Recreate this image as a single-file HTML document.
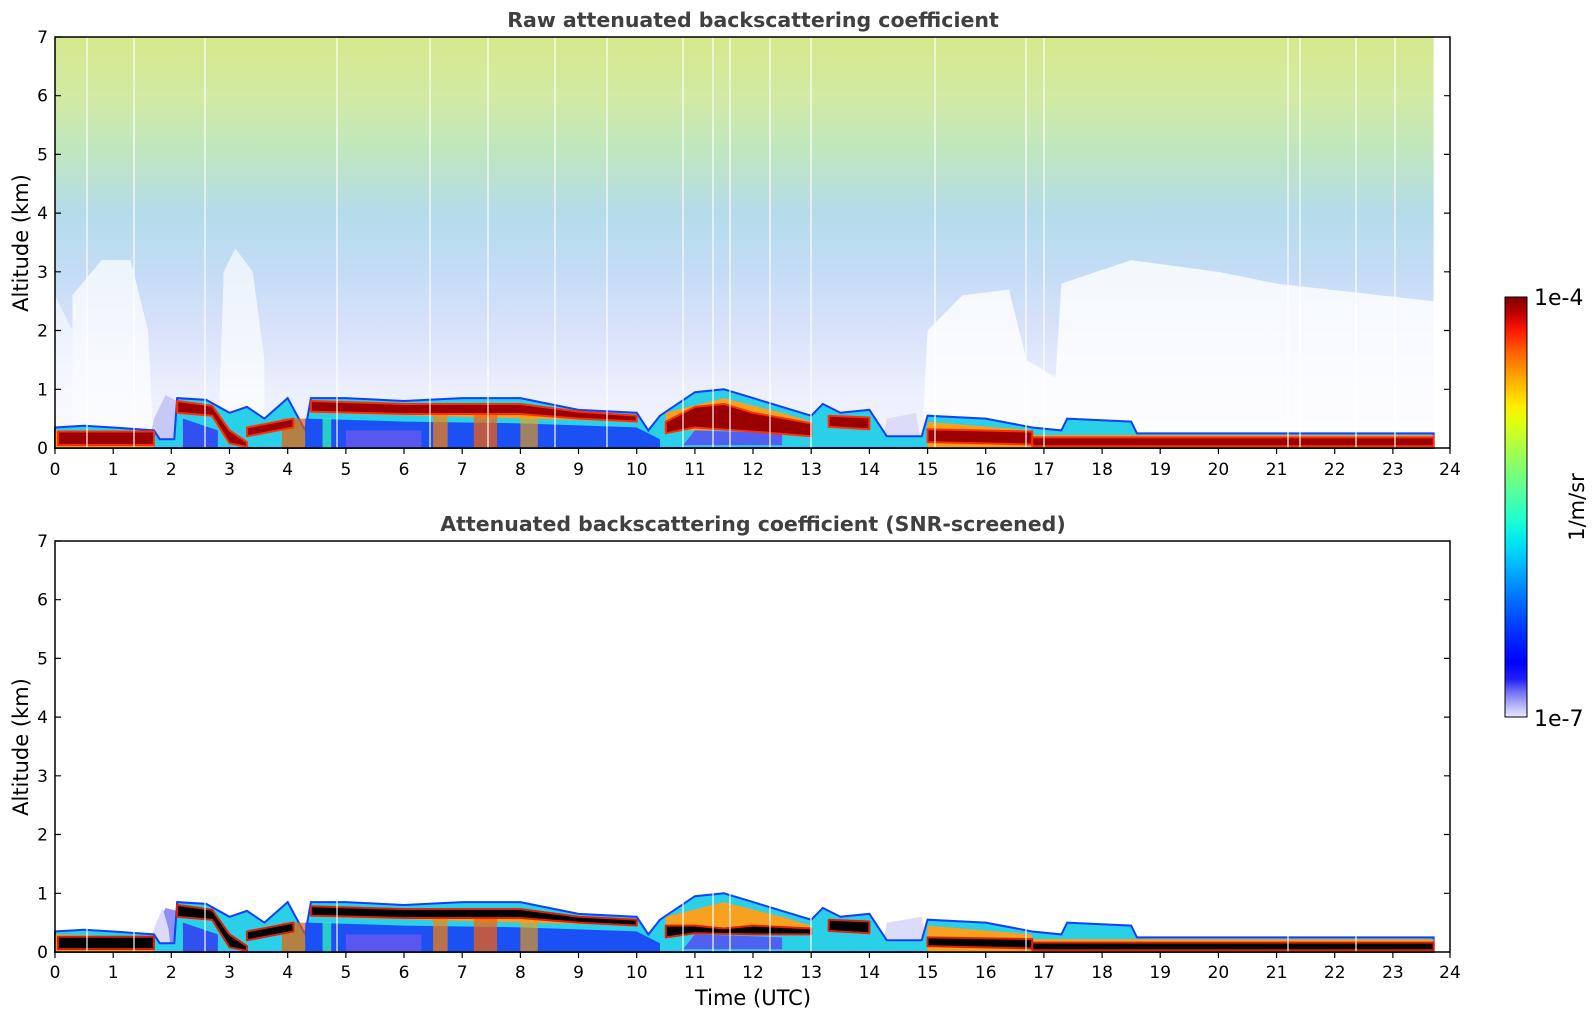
<!DOCTYPE html>
<html><head><meta charset="utf-8"><style>
html,body{margin:0;padding:0;background:#fff;}
svg{display:block;font-family:"DejaVu Sans","Liberation Sans",sans-serif;}
</style></head><body>
<svg width="1595" height="1020" viewBox="0 0 1595 1020" xmlns="http://www.w3.org/2000/svg">
<defs>
<linearGradient id="sky" x1="0" y1="0" x2="0" y2="1">
<stop offset="0" stop-color="#d6e98e"/>
<stop offset="0.14" stop-color="#d2eaa2"/>
<stop offset="0.28" stop-color="#c0e6c0"/>
<stop offset="0.43" stop-color="#b4dcea"/>
<stop offset="0.57" stop-color="#c4dcf6"/>
<stop offset="0.71" stop-color="#d8e2fa"/>
<stop offset="0.86" stop-color="#eceffd"/>
<stop offset="1" stop-color="#f4f4fe"/>
</linearGradient>
<linearGradient id="cbar" x1="0" y1="1" x2="0" y2="0">
<stop offset="0" stop-color="#e8e8fc"/>
<stop offset="0.03" stop-color="#b0b0f8"/>
<stop offset="0.06" stop-color="#7070f4"/>
<stop offset="0.09" stop-color="#2020f8"/>
<stop offset="0.13" stop-color="#0000ff"/>
<stop offset="0.2" stop-color="#0030ff"/>
<stop offset="0.3" stop-color="#0080ff"/>
<stop offset="0.37" stop-color="#00c0ff"/>
<stop offset="0.42" stop-color="#00e8f0"/>
<stop offset="0.47" stop-color="#20ffd0"/>
<stop offset="0.55" stop-color="#60ff90"/>
<stop offset="0.63" stop-color="#a0ff50"/>
<stop offset="0.7" stop-color="#e0ff10"/>
<stop offset="0.74" stop-color="#ffee00"/>
<stop offset="0.8" stop-color="#ffb000"/>
<stop offset="0.87" stop-color="#ff6000"/>
<stop offset="0.92" stop-color="#ff1800"/>
<stop offset="0.96" stop-color="#c00000"/>
<stop offset="1" stop-color="#800000"/>
</linearGradient>
</defs>

<text x="753" y="27" text-anchor="middle" font-size="20.5" font-weight="bold" fill="#404040">Raw attenuated backscattering coefficient</text>
<text x="753" y="531" text-anchor="middle" font-size="20.5" font-weight="bold" fill="#404040">Attenuated backscattering coefficient (SNR-screened)</text>

<rect x="55" y="37" width="1378.6" height="411" fill="url(#sky)"/>
<g transform="translate(55,448) scale(58.17,-58.71)">
<path d="M0.3,0 L0.3,2.6 0.8,3.2 1.3,3.2 1.6,2 1.7,0 Z" fill="#fff" opacity="0.7"/>
<path d="M2.8,0 L2.9,3 3.1,3.4 3.4,3 3.6,1.5 3.6,0 Z" fill="#fff" opacity="0.65"/>
<path d="M14.9,0 L15,2 15.6,2.6 16.4,2.7 16.7,1.5 17.2,1.2 17.3,2.8 18.5,3.2 20,3 21,2.8 23.7,2.5 23.7,0 Z" fill="#fff" opacity="0.8"/>
<path d="M0,0 L0,2.6 0.3,2 0.3,0 Z" fill="#fff" opacity="0.55"/>
<path d="M1.6,0 L1.7,0.5 1.9,0.9 2.1,0.8 2.3,0.5 2.6,0.3 2.6,0 Z" fill="#c8c8f6"/>
<path d="M14.2,0 L14.3,0.5 14.8,0.6 14.9,0 Z" fill="#dcdcfa"/>
<g id="bl">
<path d="M0,0 L0,0.35 0.5,0.38 1,0.35 1.7,0.3 1.8,0.15 2.05,0.15 2.1,0.85 2.6,0.82 3,0.6 3.3,0.7 3.6,0.5 4,0.85 4.3,0.3 4.4,0.85 5,0.85 6,0.8 7,0.85 8,0.85 8.5,0.75 9,0.65 10,0.6 10.2,0.3 10.4,0.55 11,0.95 11.5,1.0 12,0.85 12.5,0.7 13,0.55 13.2,0.75 13.5,0.6 14,0.65 14.3,0.2 14.9,0.2 15,0.55 16,0.5 16.8,0.35 17.3,0.3 17.4,0.5 18.5,0.45 18.6,0.25 23.7,0.25 23.7,0 Z" fill="#2ad0e8" stroke="#1040ff" stroke-width="2" vector-effect="non-scaling-stroke"/>
<path d="M0,0 L0,0.3 1.7,0.25 1.7,0 Z M4.4,0.7 L10,0.5 10,0.45 4.4,0.6 Z M10.5,0.6 L11.5,0.85 12.5,0.6 13,0.45 13,0.3 10.5,0.3 Z M15,0.45 L16.8,0.3 16.8,0 15,0 Z M16.8,0.22 L23.7,0.22 23.7,0 16.8,0 Z" fill="#f8a020"/>
<path d="M13.4,0.5 L13.6,0.35 13.9,0.4 13.6,0.55 Z" fill="#fff"/>
<path d="M4.3,0 L4.3,0.5 6,0.45 8,0.42 10,0.35 10.4,0.15 10.4,0 Z" fill="#1a50f4"/>
<path d="M2.2,0 L2.2,0.5 2.8,0.3 2.8,0 Z" fill="#3050f0"/>
<path d="M10.8,0.05 L11,0.3 12.5,0.25 12.5,0.05 Z" fill="#5060f0"/>
<path d="M5,0 L5,0.3 6.3,0.3 6.3,0 Z" fill="#5858f0"/>
<rect x="6.5" y="0" width="0.25" height="0.6" fill="#ff8000" opacity="0.7"/>
<rect x="7.2" y="0" width="0.4" height="0.6" fill="#ff6000" opacity="0.7"/>
<rect x="8.0" y="0" width="0.3" height="0.55" fill="#ffa000" opacity="0.6"/>
<rect x="3.9" y="0" width="0.4" height="0.5" fill="#f06000" opacity="0.7"/>
<rect x="4.6" y="0" width="0.15" height="0.5" fill="#30ffb0" opacity="0.7"/>
</g>
<g fill="#9a0000" stroke="#ff3000" stroke-width="2" stroke-linejoin="round">
<path d="M0.05,0.05 L0.05,0.28 1.7,0.28 1.7,0.05 Z" vector-effect="non-scaling-stroke"/>
<path d="M2.1,0.8 L2.7,0.72 3.0,0.3 3.3,0.1 3.3,0.02 3,0.08 2.7,0.55 2.1,0.6 Z" vector-effect="non-scaling-stroke"/>
<path d="M3.3,0.35 L4.1,0.5 4.1,0.35 3.3,0.2 Z" vector-effect="non-scaling-stroke"/>
<path d="M4.4,0.8 L6,0.75 8,0.75 9,0.62 10,0.55 10,0.45 9,0.5 8,0.58 6,0.58 4.4,0.62 Z" vector-effect="non-scaling-stroke"/>
<path d="M10.5,0.45 L11,0.7 11.5,0.75 12,0.6 13,0.42 13,0.2 12,0.28 11,0.35 10.5,0.25 Z" vector-effect="non-scaling-stroke"/>
<path d="M13.3,0.55 L14,0.52 14,0.32 13.3,0.36 Z" vector-effect="non-scaling-stroke"/>
<path d="M15,0.32 L16.8,0.28 16.8,0.06 15,0.1 Z" vector-effect="non-scaling-stroke"/>
<path d="M16.8,0.18 L23.7,0.18 23.7,0.03 16.8,0.03 Z" vector-effect="non-scaling-stroke"/>
</g>
</g>
<g stroke="#fff" stroke-width="1.3" opacity="0.9">
<line x1="87" y1="37" x2="87" y2="448"/><line x1="134" y1="37" x2="134" y2="448"/>
<line x1="205" y1="37" x2="205" y2="448"/><line x1="337" y1="37" x2="337" y2="448"/>
<line x1="430" y1="37" x2="430" y2="448"/><line x1="488" y1="37" x2="488" y2="448"/>
<line x1="555" y1="37" x2="555" y2="448"/><line x1="607" y1="37" x2="607" y2="448"/>
<line x1="683" y1="37" x2="683" y2="448"/><line x1="713" y1="37" x2="713" y2="448"/>
<line x1="730" y1="37" x2="730" y2="448"/><line x1="770" y1="37" x2="770" y2="448"/>
<line x1="811" y1="37" x2="811" y2="448"/><line x1="935" y1="37" x2="935" y2="448"/>
<line x1="1026" y1="37" x2="1026" y2="448"/><line x1="1044" y1="37" x2="1044" y2="448"/>
<line x1="1288" y1="37" x2="1288" y2="448"/><line x1="1300" y1="37" x2="1300" y2="448"/>
<line x1="1356" y1="37" x2="1356" y2="448"/><line x1="1395" y1="37" x2="1395" y2="448"/>
</g>

<g transform="translate(55,952) scale(58.17,-58.71)">
<path d="M1.6,0 L1.8,0.55 1.9,0.75 2.1,0.7 2.5,0.4 2.8,0.2 2.8,0 Z" fill="#9090f4"/>
<path d="M1.6,0 L1.7,0.4 1.85,0.75 1.95,0.4 2,0 Z" fill="#dcdcfa"/>
<path d="M14.2,0 L14.3,0.5 14.9,0.6 15,0 Z" fill="#dcdcfa"/>
<use href="#bl"/>
<g fill="#000" stroke="#e02000" stroke-width="2" stroke-linejoin="round">
<path d="M0.05,0.05 L0.05,0.26 1.7,0.26 1.7,0.05 Z" vector-effect="non-scaling-stroke"/>
<path d="M2.1,0.8 L2.7,0.72 3.0,0.3 3.3,0.1 3.3,0.02 3,0.08 2.7,0.55 2.1,0.6 Z" vector-effect="non-scaling-stroke"/>
<path d="M3.3,0.35 L4.1,0.5 4.1,0.35 3.3,0.2 Z" vector-effect="non-scaling-stroke"/>
<path d="M4.4,0.78 L6,0.73 8,0.73 9,0.6 10,0.55 10,0.45 9,0.5 8,0.58 6,0.58 4.4,0.62 Z" vector-effect="non-scaling-stroke"/>
<path d="M10.5,0.45 L11,0.45 11.5,0.4 12,0.45 13,0.4 13,0.3 12,0.3 11,0.32 10.5,0.25 Z" vector-effect="non-scaling-stroke"/>
<path d="M13.3,0.55 L14,0.52 14,0.32 13.3,0.36 Z" vector-effect="non-scaling-stroke"/>
<path d="M15,0.25 L16.8,0.22 16.8,0.06 15,0.1 Z" vector-effect="non-scaling-stroke"/>
<path d="M16.8,0.16 L23.7,0.16 23.7,0.03 16.8,0.03 Z" vector-effect="non-scaling-stroke"/>
</g>
</g>
<g stroke="#fff" stroke-width="1.3" opacity="0.9">
<line x1="87" y1="880" x2="87" y2="952"/><line x1="134" y1="880" x2="134" y2="952"/>
<line x1="205" y1="880" x2="205" y2="952"/><line x1="337" y1="880" x2="337" y2="952"/>
<line x1="683" y1="880" x2="683" y2="952"/><line x1="713" y1="880" x2="713" y2="952"/>
<line x1="730" y1="880" x2="730" y2="952"/><line x1="770" y1="880" x2="770" y2="952"/>
<line x1="811" y1="880" x2="811" y2="952"/><line x1="1026" y1="880" x2="1026" y2="952"/>
<line x1="1288" y1="880" x2="1288" y2="952"/><line x1="1356" y1="880" x2="1356" y2="952"/>
</g>

<rect x="55" y="37" width="1395" height="411" fill="none" stroke="#000" stroke-width="1.5"/>
<rect x="55" y="541" width="1395" height="411" fill="none" stroke="#000" stroke-width="1.5"/>

<g stroke="#000" stroke-width="1.2">
<path d="M55,37h6M55,95.7h6M55,154.4h6M55,213.1h6M55,271.8h6M55,330.5h6M55,389.3h6M1450,95.7h-6M1450,154.4h-6M1450,213.1h-6M1450,271.8h-6M1450,330.5h-6M1450,389.3h-6"/>
<path d="M55,541h6M55,599.7h6M55,658.4h6M55,717.1h6M55,775.8h6M55,834.5h6M55,893.3h6M1450,599.7h-6M1450,658.4h-6M1450,717.1h-6M1450,775.8h-6M1450,834.5h-6M1450,893.3h-6"/>
<path d="M55,448v6M113.2,448v6M171.3,448v6M229.5,448v6M287.7,448v6M345.9,448v6M404,448v6M462.2,448v6M520.4,448v6M578.5,448v6M636.7,448v6M694.9,448v6M753,448v6M811.2,448v6M869.4,448v6M927.6,448v6M985.7,448v6M1043.9,448v6M1102.1,448v6M1160.2,448v6M1218.4,448v6M1276.6,448v6M1334.7,448v6M1392.9,448v6M1450,448v6"/>
<path d="M55,952v6M113.2,952v6M171.3,952v6M229.5,952v6M287.7,952v6M345.9,952v6M404,952v6M462.2,952v6M520.4,952v6M578.5,952v6M636.7,952v6M694.9,952v6M753,952v6M811.2,952v6M869.4,952v6M927.6,952v6M985.7,952v6M1043.9,952v6M1102.1,952v6M1160.2,952v6M1218.4,952v6M1276.6,952v6M1334.7,952v6M1392.9,952v6M1450,952v6"/>
</g>

<g font-size="17" text-anchor="end" fill="#000">
<text x="48" y="43">7</text><text x="48" y="101.7">6</text><text x="48" y="160.4">5</text><text x="48" y="219.1">4</text><text x="48" y="277.8">3</text><text x="48" y="336.5">2</text><text x="48" y="395.3">1</text><text x="48" y="454">0</text>
<text x="48" y="547">7</text><text x="48" y="605.7">6</text><text x="48" y="664.4">5</text><text x="48" y="723.1">4</text><text x="48" y="781.8">3</text><text x="48" y="840.5">2</text><text x="48" y="899.3">1</text><text x="48" y="958">0</text>
</g>
<g font-size="17" text-anchor="middle" fill="#000">
<text x="55" y="475">0</text><text x="113.2" y="475">1</text><text x="171.3" y="475">2</text><text x="229.5" y="475">3</text><text x="287.7" y="475">4</text><text x="345.9" y="475">5</text><text x="404" y="475">6</text><text x="462.2" y="475">7</text><text x="520.4" y="475">8</text><text x="578.5" y="475">9</text><text x="636.7" y="475">10</text><text x="694.9" y="475">11</text><text x="753" y="475">12</text><text x="811.2" y="475">13</text><text x="869.4" y="475">14</text><text x="927.6" y="475">15</text><text x="985.7" y="475">16</text><text x="1043.9" y="475">17</text><text x="1102.1" y="475">18</text><text x="1160.2" y="475">19</text><text x="1218.4" y="475">20</text><text x="1276.6" y="475">21</text><text x="1334.7" y="475">22</text><text x="1392.9" y="475">23</text><text x="1450" y="475">24</text>
<text x="55" y="978">0</text><text x="113.2" y="978">1</text><text x="171.3" y="978">2</text><text x="229.5" y="978">3</text><text x="287.7" y="978">4</text><text x="345.9" y="978">5</text><text x="404" y="978">6</text><text x="462.2" y="978">7</text><text x="520.4" y="978">8</text><text x="578.5" y="978">9</text><text x="636.7" y="978">10</text><text x="694.9" y="978">11</text><text x="753" y="978">12</text><text x="811.2" y="978">13</text><text x="869.4" y="978">14</text><text x="927.6" y="978">15</text><text x="985.7" y="978">16</text><text x="1043.9" y="978">17</text><text x="1102.1" y="978">18</text><text x="1160.2" y="978">19</text><text x="1218.4" y="978">20</text><text x="1276.6" y="978">21</text><text x="1334.7" y="978">22</text><text x="1392.9" y="978">23</text><text x="1450" y="978">24</text>
</g>

<text transform="translate(28,243) rotate(-90)" text-anchor="middle" font-size="21" fill="#000">Altitude (km)</text>
<text transform="translate(28,747) rotate(-90)" text-anchor="middle" font-size="21" fill="#000">Altitude (km)</text>
<text x="753" y="1005" text-anchor="middle" font-size="21" fill="#000">Time (UTC)</text>

<rect x="1505" y="297" width="22" height="420" fill="url(#cbar)" stroke="#000" stroke-width="1"/>
<text x="1534" y="305" font-size="22" fill="#000">1e-4</text>
<text x="1534" y="726" font-size="22" fill="#000">1e-7</text>
<text transform="translate(1584,507) rotate(-90)" text-anchor="middle" font-size="21" fill="#000">1/m/sr</text>
</svg>
</body></html>
